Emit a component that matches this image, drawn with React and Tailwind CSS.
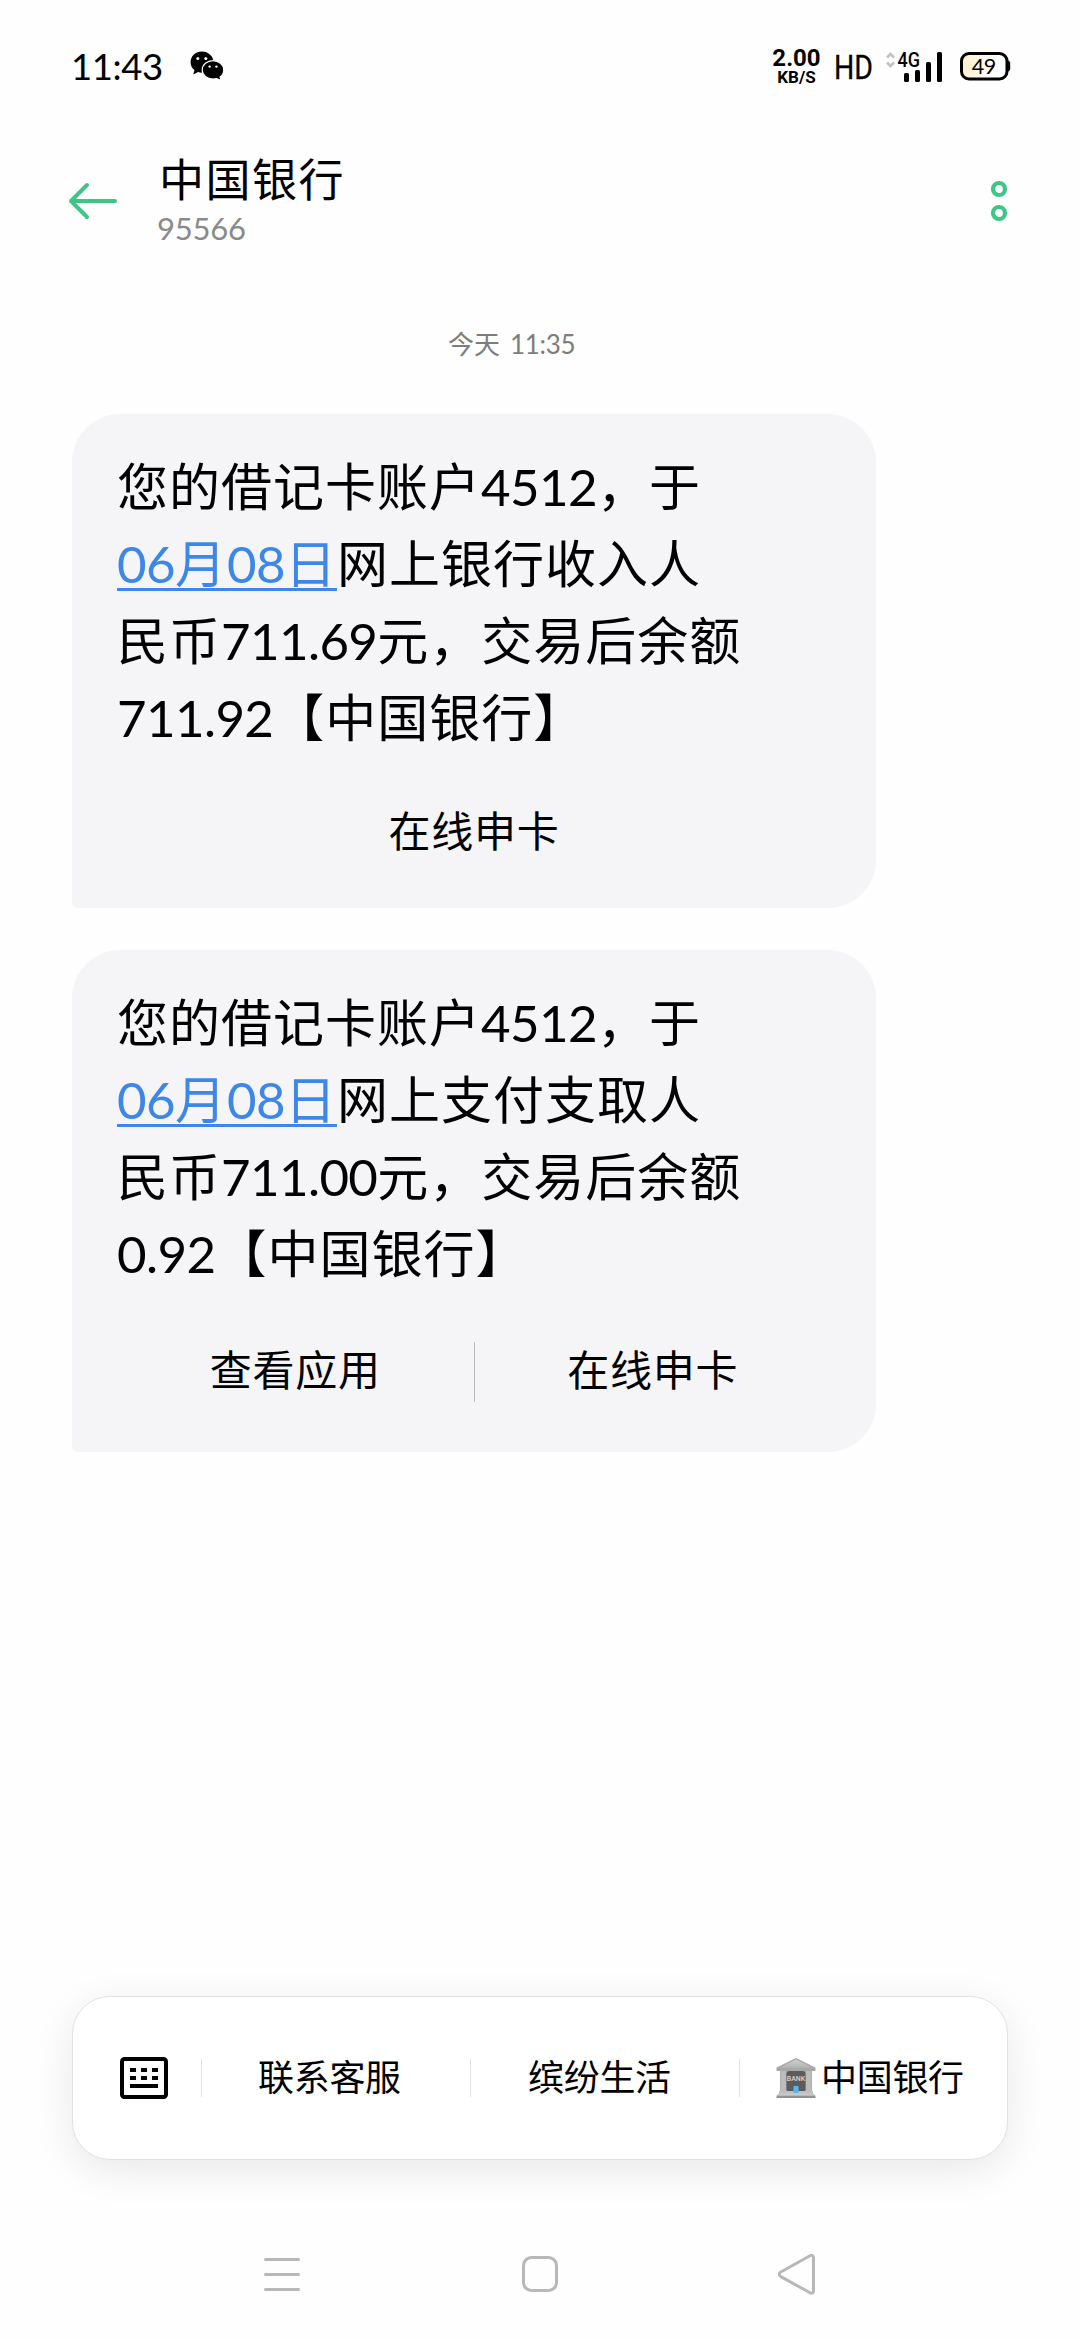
import clsx from 'clsx';

const FONT = "font-['Lato','Noto_Sans_CJK_SC',sans-serif]";

const messages = [
  {
    height: 'h-[494px]',
    actionsTop: 'mt-[47px]',
    date: '06月08日',
    lines: ['您的借记卡账户4512，于', '网上银行收入人', '民币711.69元，交易后余额', '711.92【中国银行】'],
    actions: ['在线申卡'],
  },
  {
    height: 'h-[502px]',
    actionsTop: 'mt-[50px]',
    date: '06月08日',
    lines: ['您的借记卡账户4512，于', '网上支付支取人', '民币711.00元，交易后余额', '0.92【中国银行】'],
    actions: ['查看应用', '在线申卡'],
  },
];

function WechatIcon() {
  return (
    <svg width="34" height="30" viewBox="0 0 34 30" fill="#000">
      <path d="M12 .5C5.600.5.600 5 .6 11.300c0 3.300 1.400 6 3.900 8L3.200 23.400l4.900-2.300c1.200.4 2.500.6 3.900.6 6.400 0 11.600-4.600 11.600-10.400S18.400.5 12 .5z" />
      <path d="M23 9.600c-5.800 0-10.800 4-10.800 9.300s5 9.200 10.800 9.200c1.300 0 2.500-.2 3.600-.5l4.600 2-1.100-3.600c2.200-1.700 3.600-4.300 3.600-7.100C33.700 13.600 28.800 9.600 23 9.600z" stroke="#fefefe" strokeWidth="1.2" />
      <g fill="#fefefe">
        <circle cx="7.8" cy="7.6" r="1.5" />
        <circle cx="15.8" cy="7.6" r="1.5" />
        <circle cx="19.6" cy="15.6" r="1.2" />
        <circle cx="26.4" cy="15.6" r="1.2" />
      </g>
    </svg>
  );
}

function SignalIcon() {
  return (
    <svg width="58" height="32" viewBox="0 0 58 32" className="overflow-visible font-['Roboto',sans-serif]">
      <path d="M2 6.500 5.500 3 9 6.500M2 11.500 5.500 15 9 11.500" fill="none" stroke="#c4c4c4" strokeWidth="2.8" />
      <text x="12.5" y="15.5" fontSize="20" fontWeight="500" textLength="22.5" lengthAdjust="spacingAndGlyphs">4G</text>
      <rect x="19" y="22" width="5" height="9" rx="1.5" />
      <rect x="30" y="19" width="5" height="12" rx="1.5" />
      <rect x="41" y="11" width="5" height="20" rx="1.5" />
      <rect x="52" y="1" width="5" height="30" rx="1.5" />
    </svg>
  );
}

function BatteryIcon() {
  return (
    <svg width="51" height="30" viewBox="0 0 51 30" className="overflow-visible font-['Lato',sans-serif]">
      <defs>
        <linearGradient id="charge">
          <stop offset="0" stopColor="#fdeecb" />
          <stop offset="1" stopColor="#fefaf0" />
        </linearGradient>
      </defs>
      <rect x="2" y="2.5" width="22" height="25" rx="7" fill="url(#charge)" />
      <rect x="1.5" y="2.5" width="45.5" height="25.5" rx="7.5" fill="none" stroke="#000" strokeWidth="3" />
      <path d="M48 9.500c1.700.6 2.200 1.800 2.200 3v5c0 1.200-.5 2.400-2.200 3z" />
      <text x="11.8" y="22.5" fontSize="21.5" textLength="24.5">49</text>
    </svg>
  );
}

function BankIcon() {
  return (
    <svg width="40" height="40" viewBox="0 0 40 40">
      <defs>
        <linearGradient id="stone" x2="0" y2="1">
          <stop offset="0" stopColor="#d2d2d2" />
          <stop offset="1" stopColor="#b0b0b0" />
        </linearGradient>
      </defs>
      <rect x="4" y="12" width="32" height="23" fill="#a0a0a0" />
      <rect x="10.5" y="13" width="19" height="21" rx="3" fill="#5c5c5c" />
      <path d="M20 0 39.500 9.500V13H.5V9.500z" fill="#a8a8a8" />
      <path d="M20 1.500 37 10H3z" fill="url(#stone)" />
      <rect x="4.500" y="13" width="5.5" height="20" fill="#bcbcbc" />
      <rect x="30" y="13" width="5.5" height="20" fill="#bcbcbc" />
      <rect x="3" y="33" width="34" height="3" fill="#c0c0c0" />
      <path d="M2.500 35.500h35l2 2.500H.5z" fill="#cacaca" />
      <rect x=".5" y="37.7" width="39" height="2.3" fill="#929292" />
      <rect x="17.500" y="28" width="5" height="7" fill="#55b9ea" />
      <text x="20" y="22.5" fontSize="7" textAnchor="middle" textLength="18.5" lengthAdjust="spacingAndGlyphs" fill="#d6d6d6" className="font-['Roboto',sans-serif] font-medium tracking-normal">BANK</text>
    </svg>
  );
}

function KeyboardIcon() {
  return (
    <svg width="48" height="42" viewBox="0 0 48 42">
      <rect x="2" y="2" width="44" height="38" rx="2.5" fill="none" stroke="#000" strokeWidth="4" />
      <path d="M10 13h6M21 13h6M32 13h6M10 21h6M21 21h6M32 21h6M10 29h28" stroke="#000" strokeWidth="4" />
    </svg>
  );
}

function StatusBar() {
  return (
    <div className="flex h-[132px] items-start justify-between pl-[71px] pr-[69px] pt-[51px]">
      <div className="flex items-start">
        <span className="mt-[-5px] w-[91px] text-[36.5px] leading-[40px] tracking-[-0.4px]">11:43</span>
        <div className="ml-[28px]"><WechatIcon /></div>
      </div>
      <div className="flex items-start">
        <div className="flex w-[49px] flex-col items-center font-['Roboto',sans-serif] font-bold">
          <span className="mt-[-4px] text-[24px] leading-[22px]">2.00</span>
          <span className="text-[17px] leading-[16px]">KB/S</span>
        </div>
        <svg width="38" height="28" viewBox="0 0 38 28" className="ml-[14px] mt-[2px] overflow-visible font-['Roboto',sans-serif]">
          <text x="-1" y="25.5" fontSize="33.5" textLength="39" lengthAdjust="spacingAndGlyphs" stroke="#000" strokeWidth=".3">HD</text>
        </svg>
        <div className="ml-[12px]"><SignalIcon /></div>
        <div className="ml-[17px]"><BatteryIcon /></div>
      </div>
    </div>
  );
}

function Header() {
  return (
    <div className="flex h-[130px] items-start pl-[68px] pr-[72px]">
      <svg width="50" height="38" viewBox="0 0 50 38" fill="none" stroke="#3fc585" strokeWidth="4" strokeLinecap="round" strokeLinejoin="round" className="mt-[50px]">
        <path d="M19 3 3 19l16 16M3 19h44" />
      </svg>
      <div className="ml-[39px] flex flex-col">
        <h1 className="ml-[2px] mt-[18px] text-[45px] leading-[60px] tracking-[1.5px]">中国银行</h1>
        <span className="text-[31px] leading-[36px] tracking-[-0.2px] text-[#8a8a8a]">95566</span>
      </div>
      <svg width="18" height="42" viewBox="0 0 18 42" fill="none" stroke="#3fc585" strokeWidth="4.2" className="ml-auto mt-[48px]">
        <circle cx="9" cy="9" r="6" />
        <circle cx="9" cy="33" r="6" />
      </svg>
    </div>
  );
}

// digits are set a little tighter than the Chinese around them
function Run({ text }) {
  return text.split(/([\d.]+)/).map((part, i) => (
    <span key={i} className={i % 2 ? 'tracking-[-0.6px]' : 'tracking-[1px]'}>{part}</span>
  ));
}

function Message({ msg }) {
  return (
    <div className={clsx('w-[804px] rounded-[48px] rounded-bl-[6px] bg-[#f5f5f8] px-[45px] pt-[34px]', msg.height)}>
      {msg.lines.map((line, i) => (
        <p key={i} className="whitespace-nowrap text-[51px] leading-[77px]">
          {i === 1 && (
            <span className="text-[#3d87e8] underline decoration-[3px] underline-offset-[5px] [text-decoration-skip-ink:none]">
              <Run text={msg.date} />
            </span>
          )}
          <Run text={line} />
        </p>
      ))}
      <div className={clsx('flex h-[60px] items-center', msg.actionsTop)}>
        {msg.actions.map((label, i) => (
          <div key={label} className={clsx('flex h-full flex-1 items-center justify-center pb-1 text-[42px] tracking-[0.8px]', i > 0 && 'border-l border-[#b9b9bc]')}>
            {label}
          </div>
        ))}
      </div>
    </div>
  );
}

function MenuBar() {
  return (
    <div className="mx-[72px] flex h-[164px] items-center rounded-[38px] border border-[#e2e2e2] bg-white pl-[47px] text-[36px] tracking-[-0.3px] shadow-[0_10px_40px_rgba(0,0,0,0.09)]">
      <KeyboardIcon />
      <div className="ml-[33px] h-[38px] w-px bg-[#e2e2e2]" />
      <span className="w-[268px] pb-[2px] pl-[56px]">联系客服</span>
      <div className="h-[38px] w-px bg-[#e2e2e2]" />
      <span className="w-[268px] pb-[2px] pl-[57px]">缤纷生活</span>
      <div className="h-[38px] w-px bg-[#e2e2e2]" />
      <div className="flex items-center gap-[5px] pl-[36px]">
        <BankIcon />
        <span className="pb-[2px]">中国银行</span>
      </div>
    </div>
  );
}

function NavBar() {
  return (
    <div className="flex items-center justify-between px-[262px]">
      <svg width="40" height="44" viewBox="0 0 40 44" stroke="#b8b8b8" strokeWidth="3" strokeLinecap="round">
        <path d="M3.500 7.500h33M3.500 22.500h33M3.500 37.500h33" />
      </svg>
      <svg width="40" height="44" viewBox="0 0 40 44" fill="none" stroke="#b8b8b8" strokeWidth="3">
        <rect x="3.5" y="5.5" width="33" height="33" rx="8" />
      </svg>
      <svg width="40" height="44" viewBox="0 0 40 44" fill="none" stroke="#b8b8b8" strokeWidth="3" strokeLinejoin="round">
        <path d="M32 3.700 2.800 20c-2 1.300-2 3.300 0 4.600L32 40.800c1.900 1 3.500 0 3.500-2V5.700c0-2-1.600-3-3.500-2z" />
      </svg>
    </div>
  );
}

export default function App() {
  return (
    <div className={clsx('flex h-[2340px] w-[1080px] flex-col overflow-hidden bg-[#fefefe] text-black', FONT)}>
      <StatusBar />
      <Header />
      <div className="ml-[448px] mt-[63px] flex h-[38px] gap-[10px] text-[26px] leading-[38px] text-[#7d7d7d]">
        <span>今天</span>
        <span className="tracking-[-0.3px]">11:35</span>
      </div>
      <div className="mt-[51px] flex flex-col gap-[42px] pl-[72px]">
        {messages.map((msg, i) => <Message key={i} msg={msg} />)}
      </div>
      <div className="mt-auto">
        <MenuBar />
      </div>
      <div className="mb-[44px] mt-[92px]">
        <NavBar />
      </div>
    </div>
  );
}
